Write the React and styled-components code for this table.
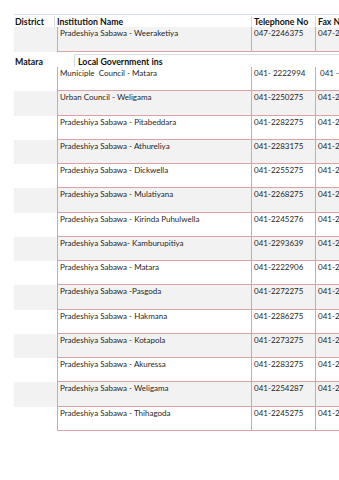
import React from 'react';
import styled, { createGlobalStyle } from 'styled-components';

const GlobalStyle = createGlobalStyle`
  html, body {
    margin: 0;
    padding: 0;
    background: #ffffff;
    overflow: hidden;
  }
  body {
    font-family: Lato, "Open Sans", "Liberation Sans", sans-serif;
    color: #1f1f1f;
  }
`;

const Page = styled.div`
  width: 339px;
  height: 480px;
  overflow: hidden;
  padding: 14px 0 0 14px;
  box-sizing: border-box;
`;

const Sheet = styled.div`
  width: 380px;
  display: flex;
  flex-direction: column;
`;

const HeaderRow = styled.div`
  display: flex;
  height: 11px;
  padding-top: 1px;
  border-top: 1px solid #d5dbe2;
  font-weight: 700;
  font-size: 8.8px;
  line-height: 11px;
  color: #111;
`;

const HeadCell = styled.div`
  width: ${p => p.w}px;
  flex: none;
  padding-left: ${p => p.pad ?? 2}px;
  box-sizing: border-box;
  border-left: ${p => (p.line ? '1px solid #d5dbe2' : 'none')};
  white-space: nowrap;
  overflow: hidden;
`;

const Row = styled.div`
  display: flex;
  height: ${p => p.h}px;
  background: ${p => (p.shade ? '#f2f2f2' : '#ffffff')};
  font-size: 8px;
  line-height: 11px;
`;

const Spacer = styled.div`
  width: ${p => p.w}px;
  flex: none;
`;

const Cell = styled.div`
  width: ${p => p.w}px;
  flex: none;
  box-sizing: border-box;
  padding: 1px 0 0 2px;
  border-left: 1px solid #d9a3a3;
  border-bottom: 1px solid #d9a3a3;
  white-space: pre;
  overflow: hidden;
`;

const Gap = styled.div`
  height: 2px;
`;

const SectionRow = styled.div`
  display: flex;
  height: 13px;
  font-weight: 700;
  font-size: 8.8px;
  line-height: 13px;
  color: #111;
`;

const SectionLabel = styled.div`
  width: 59px;
  flex: none;
  padding-left: 1px;
  padding-top: 1px;
`;

const SectionTitle = styled.div`
  flex: 1;
  border-left: 1px solid #d5dbe2;
  border-top: 1px solid #d5dbe2;
  padding-left: 3px;
  white-space: nowrap;
`;

const entries = [
  ['Municiple  Council - Matara', '041- 2222994', ' 041 - 2222994'],
  ['Urban Council - Weligama', '041-2250275', '041-2250275'],
  ['Pradeshiya Sabawa - Pitabeddara', '041-2282275', '041-2282275'],
  ['Pradeshiya Sabawa - Athureliya', '041-2283175', '041-2283175'],
  ['Pradeshiya Sabawa - Dickwella', '041-2255275', '041-2255275'],
  ['Pradeshiya Sabawa - Mulatiyana', '041-2268275', '041-2268275'],
  ['Pradeshiya Sabawa - Kirinda Puhulwella', '041-2245276', '041-2245276'],
  ['Pradeshiya Sabawa- Kamburupitiya', '041-2293639', '041-2293639'],
  ['Pradeshiya Sabawa - Matara', '041-2222906', '041-2222906'],
  ['Pradeshiya Sabawa -Pasgoda', '041-2272275', '041-2272275'],
  ['Pradeshiya Sabawa - Hakmana', '041-2286275', '041-2286275'],
  ['Pradeshiya Sabawa - Kotapola', '041-2273275', '041-2273275'],
  ['Pradeshiya Sabawa - Akuressa', '041-2283275', '041-2283275'],
  ['Pradeshiya Sabawa - Weligama', '041-2254287', '041-2254287'],
  ['Pradeshiya Sabawa - Thihagoda', '041-2245275', '041-2245275'],
];

const App = () => (
  <>
    <GlobalStyle />
    <Page>
      <Sheet>
        <HeaderRow>
          <HeadCell w={40} pad={1}>District</HeadCell>
          <HeadCell w={197} line>Institution Name</HeadCell>
          <HeadCell w={64} line>Telephone No</HeadCell>
          <HeadCell w={70} line>Fax No</HeadCell>
        </HeaderRow>
        <Row shade h={25}>
          <Spacer w={43} />
          <Cell w={194}>Pradeshiya Sabawa - Weeraketiya</Cell>
          <Cell w={64}>047-2246375</Cell>
          <Cell w={70}>047-2246375</Cell>
        </Row>
        <Gap />
        <SectionRow>
          <SectionLabel>Matara</SectionLabel>
          <SectionTitle>Local Government ins</SectionTitle>
        </SectionRow>
        {entries.map(([name, tel, fax], i) => (
          <Row key={name} shade={i % 2 === 1} h={24.27}>
            <Spacer w={43} />
            <Cell w={194}>{name}</Cell>
            <Cell w={64}>{tel}</Cell>
            <Cell w={70}>{fax}</Cell>
          </Row>
        ))}
      </Sheet>
    </Page>
  </>
);

export default App;
